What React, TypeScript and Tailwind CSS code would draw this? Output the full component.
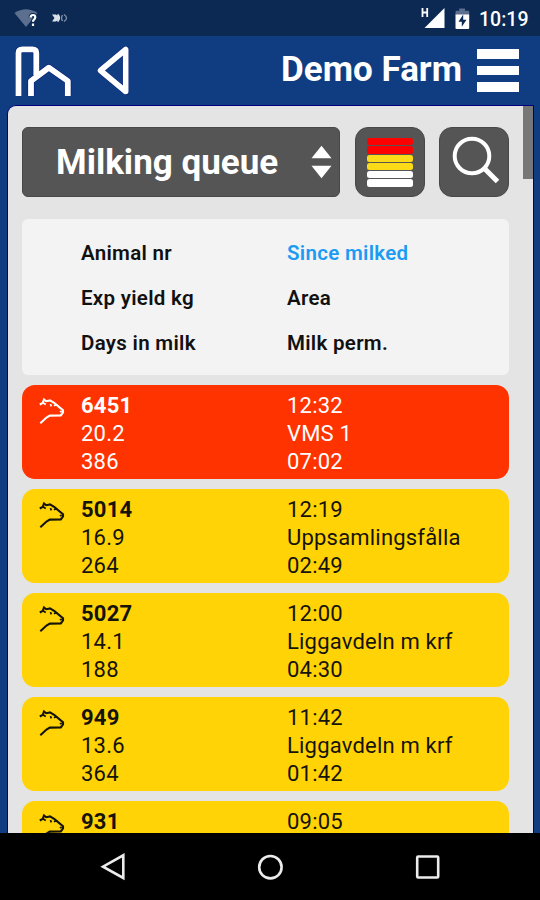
import React from "react";

type Row = {
  nr: string;
  yieldKg: string;
  days: string;
  since: string;
  area: string;
  perm: string;
  alert?: boolean;
};

const rows: Row[] = [
  { nr: "6451", yieldKg: "20.2", days: "386", since: "12:32", area: "VMS 1", perm: "07:02", alert: true },
  { nr: "5014", yieldKg: "16.9", days: "264", since: "12:19", area: "Uppsamlingsfålla", perm: "02:49" },
  { nr: "5027", yieldKg: "14.1", days: "188", since: "12:00", area: "Liggavdeln m krf", perm: "04:30" },
  { nr: "949", yieldKg: "13.6", days: "364", since: "11:42", area: "Liggavdeln m krf", perm: "01:42" },
  { nr: "931", yieldKg: "", days: "", since: "09:05", area: "", perm: "" },
];

function StatusBar() {
  return (
    <div className="flex h-9 shrink-0 items-center bg-[#0b2952] pl-[14px] pr-[12px]">
      <svg className="h-5 w-[26px]" viewBox="0 0 26 20" fill="none">
        <path d="M0.5 5 Q12 -2.5 23.5 5 L12 19 Z" fill="#5c6f8e" />
        <path d="M16.5 9.5 Q16.8 7 19 7 Q21.3 7 21.3 9.3 Q21.3 10.7 19.8 11.8 Q19 12.5 19 13.8 M19 15.8 V17.8" stroke="#0b2952" strokeWidth="4" />
        <path d="M16.5 9.5 Q16.8 7 19 7 Q21.3 7 21.3 9.3 Q21.3 10.7 19.8 11.8 Q19 12.5 19 13.8 M19 15.6 V18" stroke="#fff" strokeWidth="2.2" />
      </svg>
      <svg className="ml-[11px] h-[10px] w-[18px]" viewBox="0 0 18 10" fill="none">
        <path d="M1 1.5 H5 L9 5 L5 8.5 H1 L3.5 5 Z" fill="#dbe1ea" />
        <path d="M6.5 1.5 Q10 5 6.5 8.5" stroke="#dbe1ea" strokeWidth="1.8" />
        <path d="M11.5 2 Q9.5 5 11.5 8 M13 1.5 Q18 5 13 8.5" stroke="#8290a8" strokeWidth="1.3" />
      </svg>
      <svg className="ml-auto h-[22px] w-6" viewBox="0 0 24 22" fill="none">
        <path d="M1.5 1 V10 M6.2 1 V10 M1.5 5.5 H6.2" stroke="#fff" strokeWidth="1.8" />
        <path d="M23.5 1 V21 H3.5 Z" fill="#fff" />
      </svg>
      <svg className="ml-[10px] mt-px h-[22px] w-[15px]" viewBox="0 0 15 22">
        <path d="M0.5 7 V3.8 Q0.5 2.8 1.5 2.8 H4.3 V0.5 H10 V2.8 H13.2 Q14.2 2.8 14.2 3.8 V7 Z" fill="#5c6f8e" />
        <path d="M0.5 6.5 H14.2 V20 Q14.2 21 13.2 21 H1.5 Q0.5 21 0.5 20 Z" fill="#fff" />
        <path d="M8.2 6.5 L3.5 13.8 H6.8 V18.8 L11.5 11.7 H8.2 Z" fill="#0b2952" />
      </svg>
      <span className="ml-[9px] mt-[3px] w-[49px] whitespace-nowrap text-[19.5px] leading-none font-medium text-white">10:19</span>
    </div>
  );
}

function AppHeader() {
  return (
    <header className="flex h-[69px] shrink-0 items-start pl-[14px] pr-[21px]">
      <svg className="mt-[8px] h-[53px] w-[58px]" viewBox="0 0 58 53" fill="none">
        <path
          d="M4.5 51.5 V9 Q4.5 5.4 8.3 5.4 H18.5 Q22.3 5.4 22.3 9 V31 M17 51.5 V37 L34.8 23.6 L53.8 37 V51.5"
          stroke="#062079"
          strokeWidth="7"
          strokeLinejoin="round"
        />
        <path
          d="M4.5 52 V9 Q4.5 5.4 8.3 5.4 H18.5 Q22.3 5.4 22.3 9 V31 M17 52 V37 L34.8 23.6 L53.8 37 V52"
          stroke="#fff"
          strokeWidth="5.8"
          strokeLinejoin="round"
        />
      </svg>
      <svg className="ml-[24px] mt-[9px] h-[52px] w-[35px]" viewBox="0 0 35 52" fill="none">
        <path d="M29.7 4.5 V46.5 L4.5 25.5 Z" stroke="#062079" strokeWidth="6.8" strokeLinejoin="round" />
        <path d="M29.7 4.5 V46.5 L4.5 25.5 Z" stroke="#fff" strokeWidth="5.6" strokeLinejoin="round" />
      </svg>
      <h1 className="ml-auto mt-[13px] whitespace-nowrap text-[35px] leading-[42px] font-bold text-white">Demo Farm</h1>
      <div className="ml-[15px] mt-[13px] flex w-[42px] flex-col gap-[7px]">
        <div className="h-[9.5px] bg-white" />
        <div className="h-[9.5px] bg-white" />
        <div className="h-[9.5px] bg-white" />
      </div>
    </header>
  );
}

function Toolbar() {
  const bars = ["bg-[#ff0000]", "bg-[#ff0000]", "bg-[#fbdb17]", "bg-[#fbdb17]", "bg-white", "bg-white"];
  return (
    <div className="flex h-[70px] shrink-0">
      <div className="flex w-[318px] items-center rounded-[6px] border border-[#474747] bg-[#555555] pl-[33px] pr-[7px]">
        <span className="whitespace-nowrap text-[35px] leading-none font-bold text-white">Milking queue</span>
        <svg className="ml-auto h-[34px] w-[21px]" viewBox="0 0 22 34" fill="#fff">
          <path d="M11 0 L21.5 13 H0.5 Z" />
          <path d="M11 34 L21.5 21 H0.5 Z" />
        </svg>
      </div>
      <div className="ml-[15px] flex w-[70px] flex-col items-center gap-px rounded-[13px] border border-[#474747] bg-[#555555] pt-[10px]">
        {bars.map((color, i) => (
          <div key={i} className={`h-[7.3px] w-[46px] rounded-[2.5px] ${color}`} />
        ))}
      </div>
      <div className="ml-[14px] w-[70px] rounded-[13px] border border-[#474747] bg-[#555555]">
        <svg className="h-[68px] w-[68px]" viewBox="0 0 68 68" fill="none" stroke="#fff">
          <circle cx="32" cy="28" r="17.3" strokeWidth="4" />
          <path d="M44.2 40.2 L57.5 53.5" strokeWidth="5" />
        </svg>
      </div>
    </div>
  );
}

function ColumnCard() {
  return (
    <div className="mt-[22px] grid h-[156px] shrink-0 grid-cols-[206px_1fr] grid-rows-[45px_45px_45px] rounded-[6px] bg-[#f3f3f3] pl-[59px] pt-[12px] text-[20.5px] leading-[45px] font-semibold tracking-[0.3px] text-[#111]">
      <span>Animal nr</span>
      <span className="text-[#1b9cf2]">Since milked</span>
      <span>Exp yield kg</span>
      <span>Area</span>
      <span>Days in milk</span>
      <span>Milk perm.</span>
    </div>
  );
}

function CowIcon() {
  return (
    <svg className="ml-[17px] mt-[12px] h-[28px] w-[27px]" viewBox="0 0 27 28" fill="none" stroke="currentColor" strokeWidth="2.1" strokeLinejoin="miter">
      <path d="M0.8 7.5 L3.8 5.8 L5 2.4 L7.2 4.2 L11 3.4 L15.5 6.2 L24 13.3 L24 15.5 L21.8 18.4 L10.8 18.6 L7.5 20.6 L1.3 26.3" />
      <path d="M3.8 5.8 L6.8 7.6 M11.4 7.2 L12.4 9.4 M15 8.8 L17 7.8 M20.8 14.8 L22.8 14.2" strokeWidth="1.7" />
    </svg>
  );
}

function QueueRow({ row }: { row: Row }) {
  return (
    <div
      className={`grid h-[94px] shrink-0 grid-cols-[59px_206px_1fr] rounded-[13px] ${
        row.alert ? "bg-[#ff3300] text-white" : "bg-[#ffd305] text-[#15130a]"
      }`}
    >
      <CowIcon />
      <div className="pt-[7px] text-[22px] leading-[28px] tracking-[0.2px]">
        <div className="font-bold">{row.nr}</div>
        <div>{row.yieldKg}</div>
        <div>{row.days}</div>
      </div>
      <div className="pt-[7px] text-[22px] leading-[28px] tracking-[0.2px]">
        <div>{row.since}</div>
        <div>{row.area}</div>
        <div>{row.perm}</div>
      </div>
    </div>
  );
}

function NavBar() {
  return (
    <nav className="flex h-[67px] shrink-0 items-center bg-black pl-[100px]">
      <svg className="h-[30px] w-[342px]" viewBox="0 0 342 30" fill="none" stroke="#ececec" strokeWidth="2.6">
        <path d="M23.3 3.3 V26 L3 14.7 Z" />
        <circle cx="170.4" cy="15.2" r="11.2" />
        <rect x="317.2" y="4.5" width="21" height="21" rx="1" />
      </svg>
    </nav>
  );
}

export default function App() {
  return (
    <div className="flex h-[900px] w-[540px] flex-col overflow-hidden bg-[#103d82] font-['Roboto',sans-serif]">
      <StatusBar />
      <AppHeader />
      <main className="ml-[7px] flex min-h-0 w-[527px] flex-1 overflow-hidden rounded-tl-[9px] border-x border-t border-[#00007a] bg-[#e4e4e4] pl-[14px]">
        <div className="flex w-[487px] shrink-0 flex-col pt-[21px]">
          <Toolbar />
          <ColumnCard />
          <div className="mt-[10px] flex shrink-0 flex-col gap-[10px]">
            {rows.map((row) => (
              <QueueRow key={row.nr} row={row} />
            ))}
          </div>
        </div>
        <div className="ml-auto h-[73px] w-[10px] bg-[#777777]" />
      </main>
      <NavBar />
    </div>
  );
}
